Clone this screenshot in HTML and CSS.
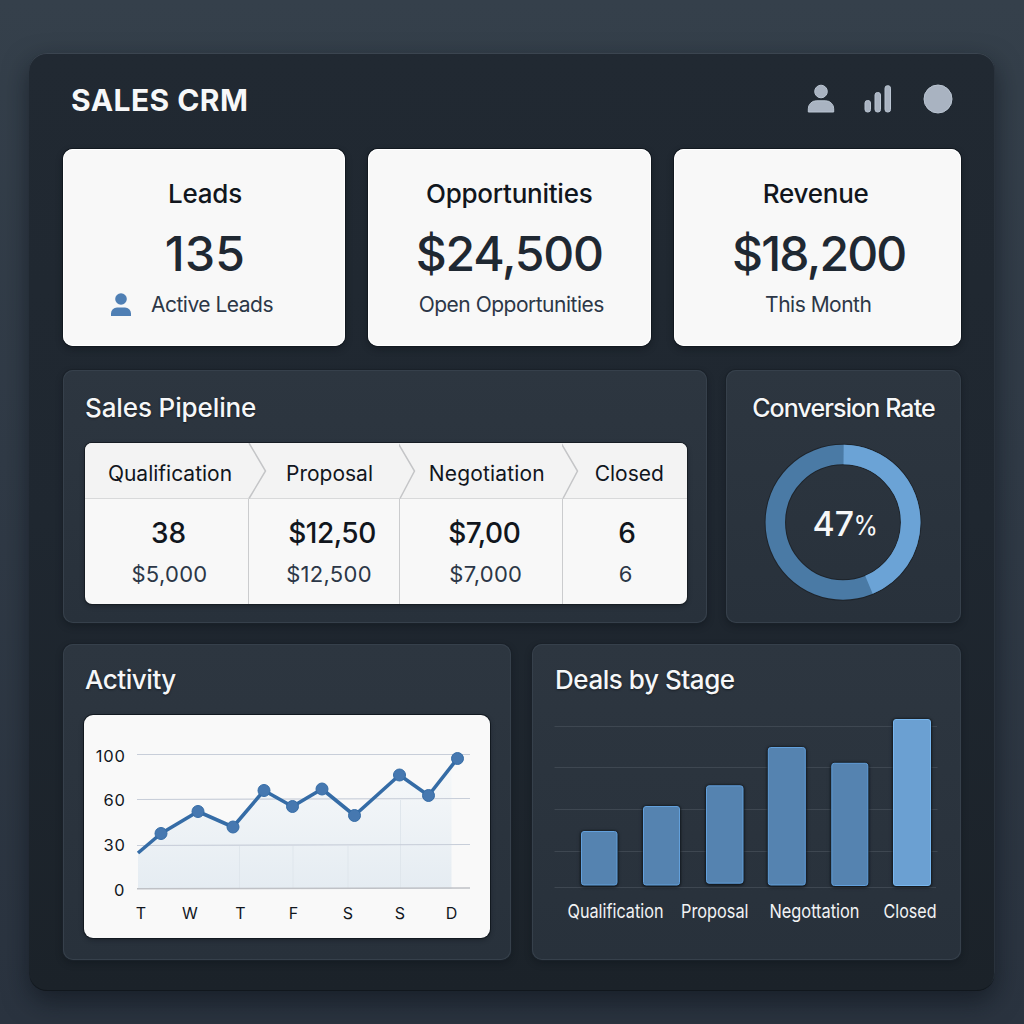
FILE: index.html
```html
<!DOCTYPE html>
<html lang="en">
<head>
<meta charset="utf-8">
<title>Sales CRM</title>
<link rel="stylesheet" href="styles.css">
</head>
<body>
<main class="app">
  <header class="topbar">
    <h1 class="brand">SALES CRM</h1>
    <nav class="tools">
      <svg width="28" height="30" viewBox="0 0 28 30"><circle cx="14" cy="7.5" r="6.3"/><path d="M1.300 28v-3.200a8 8 0 0 1 8-8h9.400a8 8 0 0 1 8 8v3.200z"/></svg>
      <svg width="28" height="28" viewBox="0 0 28 28"><rect x="1" y="15.500" width="5.500" height="11.500" rx="2.500"/><rect x="11" y="7.500" width="5.500" height="19.500" rx="2.500"/><rect x="21" y="0.700" width="5.500" height="26.300" rx="2.500"/></svg>
      <svg class="tool-avatar" width="30" height="30" viewBox="0 0 30 30"><circle cx="15" cy="15" r="14"/></svg>
    </nav>
  </header>

  <section class="row stats">
    <article class="stat leads">
      <h2 class="stat-label">Leads</h2>
      <p class="stat-value">135</p>
      <p class="stat-note">
        <svg class="note-icon" width="20" height="24" viewBox="0 0 20 24"><circle cx="10" cy="6" r="5.800"/><path d="M0 23v-2.500a6 6 0 0 1 6-6h8a6 6 0 0 1 6 6v2.500z"/></svg>
        <span>Active Leads</span>
      </p>
    </article>
    <article class="stat opportunities">
      <h2 class="stat-label">Opportunities</h2>
      <p class="stat-value">$24,500</p>
      <p class="stat-note">Open Opportunities</p>
    </article>
    <article class="stat revenue">
      <h2 class="stat-label">Revenue</h2>
      <p class="stat-value">$18,200</p>
      <p class="stat-note">This Month</p>
    </article>
  </section>

  <section class="row middle">
    <article class="panel">
      <h2 class="panel-title">Sales Pipeline</h2>
      <div class="pipeline">
        <div class="stage qualification">
          <h3 class="stage-name">Qualification</h3>
          <p class="stage-main">38</p>
          <p class="stage-sub">$5,000</p>
          <svg class="chevron" width="19" height="56" viewBox="0 0 19 56"><path d="M1 0L17.500 28L1 55.500"/></svg>
        </div>
        <div class="stage proposal">
          <h3 class="stage-name">Proposal</h3>
          <p class="stage-main">$12,50</p>
          <p class="stage-sub">$12,500</p>
          <svg class="chevron" width="19" height="56" viewBox="0 0 19 56"><path d="M-1 0L15.500 28L1 55.500"/></svg>
        </div>
        <div class="stage negotiation">
          <h3 class="stage-name">Negotiation</h3>
          <p class="stage-main">$7,00</p>
          <p class="stage-sub">$7,000</p>
          <svg class="chevron" width="19" height="56" viewBox="0 0 19 56"><path d="M-1 0L15.500 28L1 55.500"/></svg>
        </div>
        <div class="stage closed">
          <h3 class="stage-name">Closed</h3>
          <p class="stage-main">6</p>
          <p class="stage-sub">6</p>
        </div>
      </div>
    </article>
    <article class="panel conversion">
      <h2 class="panel-title">Conversion Rate</h2>
      <svg class="donut" width="160" height="160" viewBox="0 0 160 160">
        <circle class="ring-edge" cx="80" cy="80.300" r="67.700"/>
        <circle class="ring-rest" cx="80" cy="80.300" r="67.700"/>
        <circle class="ring-value" cx="80" cy="80.300" r="67.700" pathLength="100" stroke-dasharray="43.600 56.400" transform="rotate(-89.500 80 80.300)"/>
        <text class="donut-value" x="49.500" y="94" textLength="41.500" lengthAdjust="spacingAndGlyphs">47</text>
        <text class="donut-unit" x="90.500" y="92.500" textLength="24.500" lengthAdjust="spacingAndGlyphs">%</text>
      </svg>
    </article>
  </section>

  <section class="row bottom">
    <article class="panel">
      <h2 class="panel-title">Activity</h2>
      <svg class="activity" width="406" height="223" viewBox="84 715 406 223">
        <defs>
          <linearGradient id="area" x1="0" y1="758" x2="0" y2="889" gradientUnits="userSpaceOnUse">
            <stop offset="0" stop-color="#f7f9fa"/><stop offset="1" stop-color="#e5ecf2"/>
          </linearGradient>
        </defs>
        <path fill="url(#area)" d="M138 853L161 833.500L198 811.500L233 827L264 790.500L292.500 806.500L322 789L354.500 815.500L399.500 775L428.500 795.500L451.500 766V889H138z"/>
        <path class="day-mark" d="M239.500 846V889M293 846V889M348 846V889M400.500 800V889"/>
        <path class="grid" d="M137 754.500H470M137 799.500L470 798.500M137 845.500L470 844.500"/>
        <path class="base" d="M137 888.800L470 888"/>
        <path class="trend" d="M138 853L161 833.500L198 811.500L233 827L264 790.500L292.500 806.500L322 789L354.500 815.500L399.500 775L428.500 795.500L457.500 758.500"/>
        <g class="dots"><circle cx="161" cy="833.500" r="6"/><circle cx="198" cy="811.500" r="6"/><circle cx="233" cy="827" r="6"/><circle cx="264" cy="790.500" r="6"/><circle cx="292.500" cy="806.500" r="6"/><circle cx="322" cy="789" r="6"/><circle cx="354.500" cy="815.500" r="6"/><circle cx="399.500" cy="775" r="6"/><circle cx="428.500" cy="795.500" r="6"/><circle cx="457.500" cy="758.500" r="6"/></g>
        <g class="axis-y"><text x="125.500" y="761.500">100</text><text x="125.500" y="805.500">60</text><text x="125.500" y="851">30</text><text x="125" y="896">0</text></g>
        <g class="axis-x"><text x="141" y="919">T</text><text x="190" y="919">W</text><text x="240.500" y="919">T</text><text x="293.500" y="919">F</text><text x="348" y="919">S</text><text x="400" y="919">S</text><text x="451.500" y="919">D</text></g>
      </svg>
    </article>
    <article class="panel deals">
      <h2 class="panel-title">Deals by Stage</h2>
      <svg class="deals-chart" width="402" height="223" viewBox="553 715 402 223">
        <path class="deal-grid" d="M554.500 726.500H937M554.500 767.500H937.500M554.500 809.500H937.500M554.500 851.500H937.500M554.500 887.500H936"/>
        <g class="bars">
          <rect x="581.500" y="831.500" width="35.500" height="53.500" rx="2.500"/>
          <rect x="643.500" y="806.500" width="36" height="78.500" rx="2.500"/>
          <rect x="706.500" y="785.800" width="36.500" height="97.400" rx="2.500"/>
          <rect x="768.300" y="747.500" width="37" height="137.500" rx="2.500"/>
          <rect x="831.800" y="763.300" width="36" height="122.200" rx="2.500"/>
          <rect class="bar-top" x="893.500" y="719.500" width="37" height="166" rx="2.500"/>
        </g>
        <g class="deal-labels">
          <text x="567.500" y="917.700" textLength="96" lengthAdjust="spacingAndGlyphs">Qualification</text>
          <text x="681" y="917.700" textLength="67.500" lengthAdjust="spacingAndGlyphs">Proposal</text>
          <text x="769.500" y="918.300" textLength="90" lengthAdjust="spacingAndGlyphs">Negottation</text>
          <text x="883.500" y="918.300" textLength="53" lengthAdjust="spacingAndGlyphs">Closed</text>
        </g>
      </svg>
    </article>
  </section>
</main>
</body>
</html>
```

FILE: styles.css
```css
* { box-sizing: border-box; }

body {
  margin: 0;
  width: 1024px;
  height: 1024px;
  padding: 53px 29px 33px;
  overflow: hidden;
  background: linear-gradient(180deg, #35404b 0%, #303a46 45%, #2a333f 100%);
  font-family: Inter, "Liberation Sans", sans-serif;
}

h1, h2, h3, p { margin: 0; font-weight: 400; }
svg { display: block; }

.app {
  width: 966px;
  height: 938px;
  padding: 0 34px 31px;
  display: flex;
  flex-direction: column;
  border-radius: 18px;
  background: linear-gradient(180deg, #212932 0%, #1f2730 50%, #1b2229 100%);
  box-shadow: inset 0 1px 0 #3b4550, inset 0 -1px 0 #11171d, inset -1px 0 0 #29323c, 0 10px 26px rgba(10, 15, 22, .55);
}

.topbar {
  height: 96px;
  display: flex;
  align-items: center;
  justify-content: space-between;
  padding: 0 8px 4px 8px;
}
.brand { padding-top: 2px; font-size: 30px; line-height: 36px; font-weight: 700; color: #f7f8f9; letter-spacing: .45px; }
.tools { display: flex; align-items: center; gap: 29px; fill: #a9b3c1; stroke: #bac5d2; stroke-width: 1; }
.tool-avatar { margin-left: 2px; }

.row { display: grid; }
.stats { grid-template-columns: 282px 282.500px 287.500px; gap: 23px; height: 197px; }
.middle { grid-template-columns: 644px 235px; gap: 19px; height: 253px; margin-top: 24px; }
.bottom { grid-template-columns: 448px 429px; gap: 21px; height: 316px; margin-top: 21px; }

.stat {
  padding-top: 29px;
  border-radius: 10px;
  background: #f8f8f8;
  box-shadow: inset 0 0 0 1px #fff, 0 0 0 1px #121920, 0 3px 7px rgba(10, 14, 19, .4);
  text-align: center;
}
.stat-label { font-size: 26px; line-height: 32px; font-weight: 500; letter-spacing: -.25px; color: #11161d; }
.stat-value { margin-top: 14px; font-size: 48px; line-height: 60px; font-weight: 550; color: #1f2832; }
.stat-note { margin-top: 7px; font-size: 21px; line-height: 28px; letter-spacing: -.5px; color: #2c3747; }
.leads .stat-label { padding-left: 2px; }
.leads .stat-value { padding-left: 2px; letter-spacing: .3px; }
.leads .stat-note { display: flex; justify-content: center; align-items: center; gap: 20px; padding-right: 24px; }
.opportunities .stat-value { letter-spacing: -1.200px; }
.opportunities .stat-note { padding-left: 4px; }
.revenue .stat-label { padding-right: 3px; }
.revenue .stat-value { padding-left: 3px; letter-spacing: -1.800px; }
.revenue .stat-note { padding-left: 2px; }
.note-icon { fill: #4f7fb4; }

.panel {
  min-width: 0;
  padding: 22px 20px 0 22px;
  border-radius: 10px;
  background: linear-gradient(180deg, #2d3640 0%, #28313b 100%);
  box-shadow: inset 0 0 0 1px #36404b, 0 0 0 1px #1a2129, 0 3px 7px rgba(10, 14, 19, .35);
}
.panel-title { font-size: 26px; line-height: 32px; font-weight: 500; letter-spacing: -.12px; color: #f6f7f8; text-shadow: 0 1px 2px #161c23; }

.pipeline {
  width: 602px;
  height: 161px;
  margin-top: 19px;
  display: grid;
  grid-template-columns: 163px 151px 162.500px 125.500px;
  border-radius: 7px;
  background: #f8f8f8;
  box-shadow: 0 0 0 1px #171d24, 0 2px 5px rgba(10, 14, 19, .4);
}
.stage { position: relative; text-align: center; color: #11161d; }
.stage + .stage .stage-main, .stage + .stage .stage-sub { border-left: 1px solid #cbccce; }
.stage-name { height: 56px; line-height: 61px; font-size: 21px; border-bottom: 1px solid #d8d9da; background: #f3f3f3; }
.stage:first-child .stage-name { border-top-left-radius: 7px; }
.stage:last-child .stage-name { border-top-right-radius: 7px; }
.stage-main { height: 56px; padding-top: 16px; line-height: 36px; font-size: 28px; font-weight: 550; letter-spacing: -.5px; }
.stage-sub { height: 49px; padding-top: 4px; line-height: 30px; font-size: 22px; letter-spacing: .3px; color: #2c3747; }
.qualification .stage-name { padding-left: 7px; }
.qualification .stage-main { padding-left: 4px; letter-spacing: 0; }
.qualification .stage-sub { padding-left: 6px; }
.proposal .stage-name { padding-left: 12px; }
.proposal .stage-main { padding-left: 16px; }
.proposal .stage-sub { padding-left: 10px; }
.negotiation .stage-name { padding-left: 13px; letter-spacing: .15px; }
.negotiation .stage-main { padding-left: 7px; }
.negotiation .stage-sub { padding-left: 10px; }
.closed .stage-name { padding-left: 10px; }
.closed .stage-main { padding-left: 4px; }
.closed .stage-sub { padding-left: 2px; }
.chevron { position: absolute; right: -19px; top: 0; z-index: 1; fill: none; stroke: #c4c5c7; stroke-width: 1.500; }

.conversion { padding: 22px 0 0; text-align: center; }
.conversion .panel-title { font-size: 25px; font-weight: 450; letter-spacing: -.9px; }
.donut { margin: 18px auto 0 37px; }
.donut circle { fill: none; }
.ring-edge { stroke: #1e242b; stroke-width: 21.500; }
.ring-rest { stroke: #4a7aa5; stroke-width: 19.500; }
.ring-value { stroke: #6ba3d6; stroke-width: 19.500; }
.donut-value { font-size: 34px; font-weight: 500; fill: #f6f7f8; }
.donut-unit { font-size: 27px; fill: #f6f7f8; }

.activity {
  margin: 19px 0 0 -1px;
  border-radius: 9px;
  background: #f9f9f9;
  box-shadow: 0 0 0 1px #121920, 0 2px 5px rgba(10, 14, 19, .4);
}
.bottom .panel { padding-top: 20px; }
.bottom .panel-title { letter-spacing: -.45px; }
.day-mark { stroke: #dfe6ec; fill: none; }
.grid { stroke: #c8ced9; stroke-width: 1.200; fill: none; }
.base { stroke: #bfc1c6; stroke-width: 1.500; fill: none; }
.trend { stroke: #356ca6; stroke-width: 3.600; fill: none; stroke-linejoin: round; }
.dots { fill: #4678b0; stroke: #356ca6; stroke-width: 1; }
.axis-y { font-size: 16.500px; letter-spacing: .7px; text-anchor: end; fill: #11161d; }
.axis-x { font-size: 16px; text-anchor: middle; fill: #11161d; }

.deals { padding-left: 23px; }
.deals-chart { margin: 19px 0 0 -2px; }
.deal-grid { stroke: #3e4751; fill: none; }
.bars { fill: #5583b0; stroke: #62a0dc; filter: drop-shadow(0 0 1px #10151a) drop-shadow(0 1px 1.500px #10151a); }
.bar-top { fill: #6ba0d2; stroke: #78b7ef; }
.deal-labels { font-size: 19px; fill: #f2f3f4; }
```
